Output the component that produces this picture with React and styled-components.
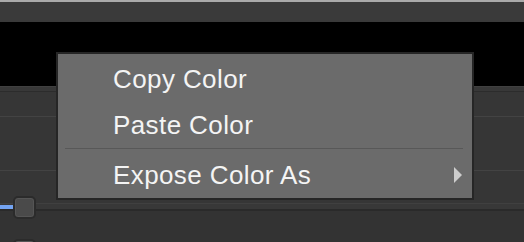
import React from "react";
import styled, { createGlobalStyle } from "styled-components";

const GlobalStyle = createGlobalStyle`
  html, body {
    margin: 0;
    padding: 0;
    background: #353535;
    overflow: hidden;
  }
  body {
    font-family: "Liberation Sans", Arial, sans-serif;
  }
`;

const Page = styled.div`
  position: relative;
  width: 524px;
  height: 242px;
  overflow: hidden;
  display: flex;
  flex-direction: column;
  background: #353535;

  & > * {
    flex-shrink: 0;
  }
`;

const TopBar = styled.div`
  height: 20px;
  border-top: 2px solid #a9a9a9;
  background: #3a3a3a;
`;

const Viewer = styled.div`
  height: 64px;
  background: #000;
`;

const PanelHeader = styled.div`
  height: 4px;
  background: #383838;
  border-top: 1px solid #404040;
  border-bottom: 1px solid #2c2c2c;
`;

const PanelRow = styled.div`
  height: ${(p) => p.$h}px;
  background: #363636;
  border-top: ${(p) => (p.$line ? "1px solid #434343" : "none")};
  box-sizing: border-box;
`;

const SliderRow = styled.div`
  height: 24px;
  display: flex;
  align-items: center;
  background: linear-gradient(
    to bottom,
    #363636 0,
    #363636 8px,
    #404040 8px,
    #404040 9px,
    #383838 9px,
    #383838 14px,
    #2a2a2a 14px,
    #2a2a2a 16px,
    #333 16px,
    #333 100%
  );
`;

const SliderFill = styled.div`
  width: 13px;
  height: 4px;
  background: #74a4f2;
`;

const Knob = styled.div`
  width: 19px;
  height: 19px;
  border-radius: 5px;
  background: #4a4a4a;
  border: 2px solid #2b2b2b;
  box-shadow: inset 0 0 0 1px #555;
`;

const BottomRow = styled.div`
  flex: 1 1 auto;
  min-height: 0;
  overflow: hidden;
  background: #333;
  padding: 20px 0 0 13px;
`;

const Menu = styled.div`
  position: absolute;
  left: 56px;
  top: 52px;
  width: 414px;
  padding-top: 2px;
  background: #6b6b6b;
  border: 2px solid #262626;
  color: #f4f4f4;
  font-size: 26px;
  letter-spacing: 0.4px;
`;

const MenuItem = styled.div`
  height: ${(p) => p.$h}px;
  line-height: ${(p) => p.$h}px;
  padding-left: 55px;
  padding-right: 10px;
  display: flex;
  align-items: center;
  justify-content: space-between;
  white-space: nowrap;
`;

const Separator = styled.div`
  height: 1px;
  margin: 0 9px 4px 7px;
  background: #585858;
`;

const Arrow = styled.svg`
  width: 8px;
  height: 16px;
  margin-top: -1px;
`;

export default function App() {
  return (
    <>
      <GlobalStyle />
      <Page>
        <TopBar />
        <Viewer />
        <PanelHeader />
        <PanelRow $h={24} />
        <PanelRow $h={54} $line />
        <PanelRow $h={25} $line />
        <SliderRow>
          <SliderFill />
          <Knob />
        </SliderRow>
        <BottomRow>
          <Knob />
        </BottomRow>

        <Menu>
          <MenuItem $h={46}>Copy Color</MenuItem>
          <MenuItem $h={46}>Paste Color</MenuItem>
          <Separator />
          <MenuItem $h={45}>
            <span>Expose Color As</span>
            <Arrow viewBox="0 0 8 16">
              <path d="M0 0 L8 8 L0 16 Z" fill="#cdcdcd" />
            </Arrow>
          </MenuItem>
        </Menu>
      </Page>
    </>
  );
}
